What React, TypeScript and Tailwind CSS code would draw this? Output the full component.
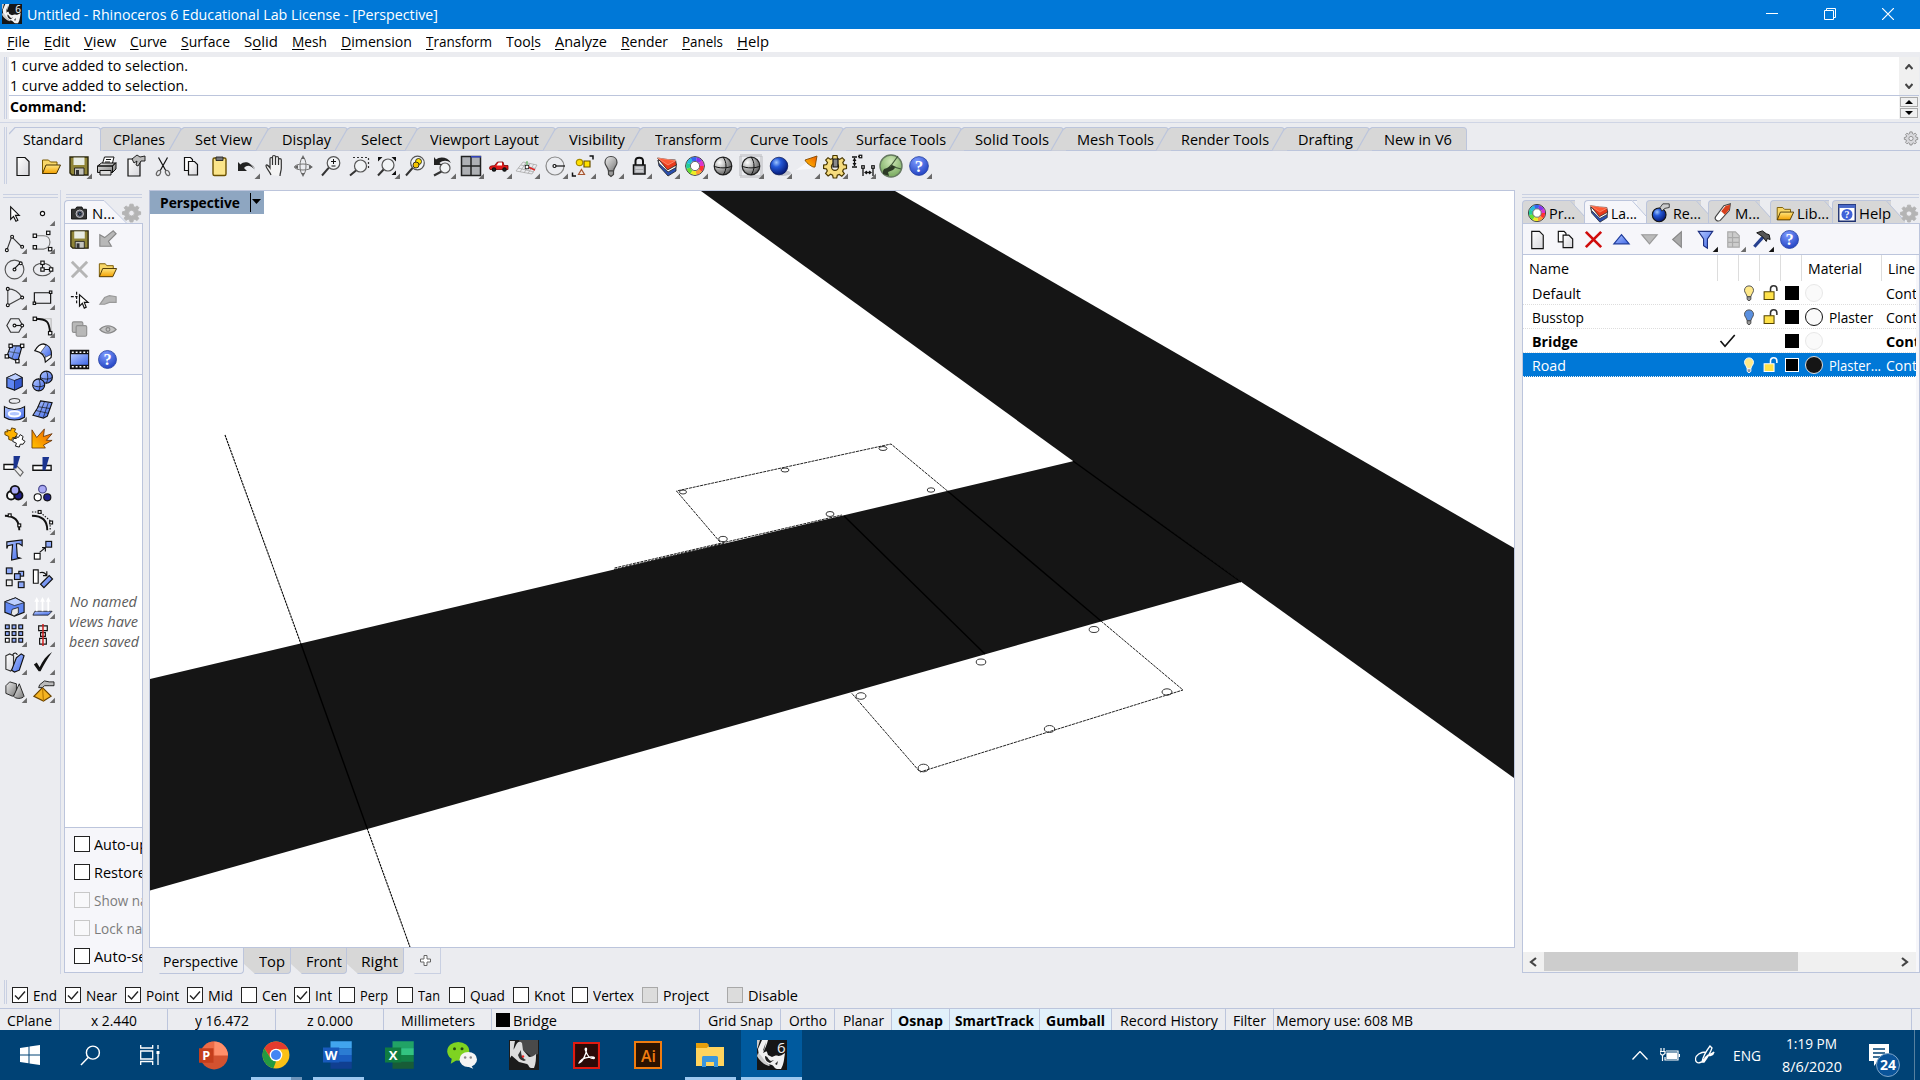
import { useLayoutEffect, useRef, type ReactNode } from 'react';

/* Text squeezed or stretched to the width of its box. */
function T({ children, className = '' }: { children: ReactNode; className?: string }) {
  const outer = useRef<HTMLSpanElement>(null);
  const inner = useRef<HTMLSpanElement>(null);
  useLayoutEffect(() => {
    const o = outer.current;
    const i = inner.current;
    if (!o || !i) return;
    i.style.transform = 'none';
    i.style.transform = `scaleX(${o.clientWidth / i.getBoundingClientRect().width})`;
  });
  return (
    <span ref={outer} className={`block shrink-0 whitespace-nowrap ${className}`}>
      <span ref={inner} className="inline-block origin-left">{children}</span>
    </span>
  );
}

function Svg({ children, fly, dark, className = 'size-6' }: { children?: ReactNode; fly?: boolean; dark?: boolean; className?: string }) {
  return (
    <svg viewBox="0 0 24 24" className={`shrink-0 overflow-visible ${className}`} fill="none" stroke="#111" strokeWidth="1.2">
      {children}
      {fly && <path d="M25 19.500v5.500h-5.500z" fill={dark ? '#111' : '#6a6a6a'} stroke="none" />}
    </svg>
  );
}

const Defs = () => (
  <svg className="absolute size-0">
    <defs>
      <linearGradient id="blue" x1="0" y1="0" x2="1" y2="1"><stop offset="0" stopColor="#b4c8ff" /><stop offset="1" stopColor="#3f68e8" /></linearGradient>
      <linearGradient id="gold" x1="0" y1="0" x2="0" y2="1"><stop offset="0" stopColor="#ffe680" /><stop offset="1" stopColor="#f2a000" /></linearGradient>
      <linearGradient id="page" x1="0" y1="0" x2="1" y2="1"><stop offset="0" stopColor="#fff" /><stop offset="1" stopColor="#d5d5da" /></linearGradient>
      <linearGradient id="gray" x1="0" y1="0" x2="1" y2="1"><stop offset="0" stopColor="#eee" /><stop offset="1" stopColor="#777" /></linearGradient>
      <linearGradient id="fire" x1="0" y1="1" x2="1" y2="0"><stop offset="0" stopColor="#ffc400" /><stop offset="1" stopColor="#ee5a00" /></linearGradient>
      <radialGradient id="help" cx=".4" cy=".25" r=".8"><stop offset="0" stopColor="#7d9bff" /><stop offset="1" stopColor="#1f3fbf" /></radialGradient>
      <radialGradient id="ball" cx=".35" cy=".3" r=".75"><stop offset="0" stopColor="#9cc4ff" /><stop offset=".35" stopColor="#2458d8" /><stop offset="1" stopColor="#02146e" /></radialGradient>
      <radialGradient id="silver" cx=".3" cy=".3" r=".8"><stop offset="0" stopColor="#fff" /><stop offset="1" stopColor="#555" /></radialGradient>
      <radialGradient id="grass" cx=".5" cy=".3" r=".8"><stop offset="0" stopColor="#cfe8b8" /><stop offset="1" stopColor="#6aa050" /></radialGradient>
    </defs>
  </svg>
);

/* ---------- shared glyphs ---------- */
const newPage = <path d="M6 3.500h8l4 4v14H6z" fill="url(#page)" />;
const folder = (
  <g strokeWidth="1">
    <path d="M3.500 19.500V6h6l2 2h6.500v4" fill="#f8d768" stroke="#7a5a00" />
    <path d="M3.500 19.500 7 11H21.500l-4 8.500z" fill="url(#gold)" stroke="#4a3400" />
  </g>
);
const disk = (
  <g>
    <path d="M3 3h18v18H5l-2-2z" fill="#8f8437" stroke="#2a260c" strokeWidth="1.400" />
    <path d="M6.500 3.500h11v7.500h-11z" fill="#e8ece4" stroke="none" />
    <path d="M7.500 14h9.500v7H7.500z" fill="#c4c4bc" strokeWidth=".8" />
    <path d="M9 16h3v5H9z" fill="#333" stroke="none" />
  </g>
);
const cut = (
  <g>
    <path d="M7.500 3.500 15 17M16.500 3.500 9 17" strokeWidth="1.200" />
    <ellipse cx="7.500" cy="19" rx="1.800" ry="2.800" stroke="#666" transform="rotate(30 7.500 19)" />
    <ellipse cx="16.500" cy="19" rx="1.800" ry="2.800" stroke="#666" transform="rotate(-30 16.500 19)" />
  </g>
);
const helpGlyph = (
  <g>
    <circle cx="12" cy="12" r="9.400" fill="url(#help)" stroke="#2440a0" strokeWidth=".8" />
    <text x="12" y="17.800" textAnchor="middle" fill="#fff" stroke="none" fontSize="17" fontWeight="bold" fontFamily="Liberation Serif, serif">?</text>
  </g>
);
const wheel = (
  <g strokeWidth="4">
    <circle cx="12" cy="12" r="9.300" stroke="#222" strokeWidth="1" />
    {['#f33', '#f93', '#ee2', '#6d3', '#2c9', '#2bd', '#36e', '#83e', '#d3c'].map((c, i) => (
      <circle key={c} cx="12" cy="12" r="6.900" stroke={c} strokeDasharray="4.900 38.500" strokeDashoffset={-i * 4.82} />
    ))}
    <circle cx="12" cy="12" r="4.600" strokeWidth=".8" fill="#fff" stroke="#444" />
  </g>
);
const layers = (
  <g strokeWidth=".8" stroke="#222">
    <path d="m3 6 1 6 9 10 8-5v-6z" fill="#2a4fb0" />
    <path d="m3 6 1 3.500 9 8.500 8-4.500v-3z" fill="#fff" />
    <path d="m2.500 4 10 1.500L20.500 6l1 5-9 5z" fill="#e83a1c" />
    <path d="m2.500 4 10.500 7 8-4.500z" fill="#ff5a34" stroke="#ffb09a" strokeWidth=".6" />
  </g>
);
const mag = (x: number, y: number, r: number) => (
  <g>
    <path d={`M${x - r * 0.7} ${y + r * 0.7} 3 21.500`} strokeWidth="2" stroke="#333" />
    <circle cx={x} cy={y} r={r} fill="#f2f4f6" stroke="#555" strokeWidth="1.200" />
  </g>
);
const bulb = (fill: string, stroke: string) => (
  <g>
    <path d="M12 2.500c-4 0-6 3-6 6s3 5 3.500 8.500h5C15 13.500 18 11.500 18 8.500s-2-6-6-6z" fill={fill} stroke={stroke} />
    <path d="M9.500 17h5v3.500L12 22.500 9.500 20.500z" fill="#999" stroke={stroke} />
  </g>
);
const sphereGrid = (
  <g>
    <circle cx="12" cy="12" r="8.800" fill="url(#silver)" stroke="#222" />
    <path d="M3 12c4 2.500 14 2.500 18 0M12 3c4 5 4 13 0 18" strokeWidth="1" />
  </g>
);
const gear = (fill: string, stroke: string, hole = '#ececf0') => (
  <g fill={fill} stroke={stroke}>
    <path d="M10 1.500h4l.6 3 2 .9L19.200 3.700 21.500 6l-1.700 2.600.8 2 2.900.5v3.500l-3 .6-.9 2 1.700 2.500-2.500 2.500-2.500-1.700-2 .8-.6 2.700h-3.500l-.6-2.800-2-.9-2.500 1.700-2.500-2.500 1.700-2.500-.8-2-2.900-.6v-3.300l3-.6.9-2L2.700 6 5 3.700l2.500 1.700 2-.9z" />
    <circle cx="12" cy="12.800" r="3.600" fill={hole} />
  </g>
);
const sq = (x: number, y: number, f = '#fff', s = 3.5) => <rect x={x - s / 2} y={y - s / 2} width={s} height={s} fill={f} />;
const dot = (x: number, y: number, f = '#fff') => <circle cx={x} cy={y} r="1.500" fill={f} />;
/* rhino head, 30 x 30 */
const rhinoHead = (
  <g stroke="none">
    <path d="M0 0h30v30H0z" fill="#161616" />
    <path d="M5 0h6c-1 4-3 9-5 13 2-1 4-2 4-1l1 3 4 2c2-1 5-2 6-1 3 0 4-1 7-3-1 6-1 11-4 16h-4c-2 0-3-3-5-4l-4-1c-3-2-7-4-9-8L1 9z" fill="#f2f2f2" />
    <path d="M0 0h3L1 7 0 9zM1 13c5 3 6 9 12 12l-1 1C6 24 2 20 0 16z" fill="#ccc" />
    <path d="M8 16c3 0 3 4 6 5l3-1-4 3c-3-1-5-3-5-7zM18 24l3-3-1 4z" fill="#222" />
    <path d="M9 2 6 10l1 1z" fill="#444" />
  </g>
);

/* ---------- main toolbar ---------- */
const toolbar: [ReactNode, boolean][] = [
  [newPage, false],
  [folder, false],
  [disk, true],
  [<g strokeWidth="1"><path d="m7 11 2.500-8H19l-2 8z" fill="#fff" /><path d="m2.500 12 4-3h14l-3 3zM2.500 12h15v6.500h-15zM17.500 12l3.500-3.500V15l-3.500 3.500z" fill="url(#gray)" /><path d="M5 16.500h11V21H5z" fill="#ddd" /><path d="M11 5.500h5M10 8h5" /></g>, false],
  [<g><path d="M5 5h12v17H5z" fill="url(#page)" /><path d="m9 5 5-4 3 2 5-1v5h-4l-3 5-2-1 1-4-3 2z" fill="#bbb" strokeWidth=".9" /></g>, false],
  [cut, false],
  [<g><path d="M5.500 3.500h6l2 2v11h-8z" fill="#fff" /><path d="M9.500 7.500h6l3 3v10.500h-9z" fill="url(#page)" /></g>, false],
  [<g><rect x="6" y="4" width="13" height="17.500" rx="1.500" fill="#fbe58a" stroke="#6b5200" strokeWidth="1.400" /><path d="M9 3h7v3.500H9z" fill="#777" stroke="#222" strokeWidth=".9" /></g>, false],
  [<g stroke="none"><path d="M3 8v9h9l-3-3c3-3 6-3 10 1C15 7 9 7 5.500 10.500z" fill="#222" /><path d="M16 11c3 1 4 4 4 7 0-5-1-7-6-8z" fill="#777" /></g>, true],
  [<path d="M8 21c-1-3-5-7-5-9s2-1 4 2V5c0-2 2.500-2 2.500 0V3c0-2 3-2 3 0v1c0-2 3-2 3 0v2c0-1.800 2.800-1.800 2.800 0v8c0 3-1.300 5-1.300 8M9.500 5v6M12.500 4v7M15.500 5v6" fill="#f4f4f4" stroke="#333" />, false],
  [<g stroke="#777" strokeWidth="1"><ellipse cx="12" cy="13" rx="8.500" ry="3" /><ellipse cx="12" cy="12" rx="3" ry="8.500" /><path d="m12 1 2 4h-4zM3 13l4-2v4zM22 13l-4-2v4zM12 23l2-4h-4z" fill="#666" stroke="none" /></g>, false],
  [<g>{mag(14.5, 9, 6.3)}<path d="M12 7.500h5M14.500 5v5M12.500 12h4" strokeWidth="1" /></g>, false],
  [<g><path d="M6 3.500h15.500v12" strokeDasharray="2 2" stroke="#333" />{mag(13.5, 12, 6)}</g>, false],
  [<g>{mag(13, 11, 6)}<path d="M3 7.500V3h4.500zM16.500 3H21v4.500zM21 16.500V21h-4.500z" fill="#111" stroke="none" /></g>, true],
  [<g>{mag(14.5, 9, 6.8)}<circle cx="15.500" cy="7.500" r="3" fill="#ffe200" strokeWidth=".8" /><circle cx="13" cy="11" r="3" fill="#f5c400" strokeWidth=".8" /></g>, false],
  [<g>{mag(14, 14, 5)}<path d="M3 3v8h8L8.500 9C12 6 16 6 20 9 17 3 9 2 5 5.500z" fill="#222" stroke="none" /></g>, true],
  [<g><path d="M2.500 2.500h19v19h-19z" fill="#aeb0b4" stroke="#222" strokeWidth="1.500" /><path d="M12 2.500v19M2.500 12h19" stroke="#222" strokeWidth="1.500" /><path d="M12 2h10v1.500H12z" fill="#34b" stroke="none" /></g>, true],
  [<g><path d="M2.500 14.500c0-3 2-2.500 5-3l3-3.500h5.500l1 3.500h4v4H3z" fill="#e01818" stroke="#700" strokeWidth=".8" /><path d="m11.500 8.500-2 3h5.500v-3z" fill="#fff" stroke="none" /><circle cx="7" cy="15.500" r="1.700" fill="#222" /><circle cx="17.500" cy="15.500" r="1.700" fill="#222" /></g>, true],
  [<g stroke="#aaa" strokeWidth=".8"><path d="m8 8 14 3-5 9L1 17zM11 8.500 5 18M15 9.500l-6 9.500M19 10l-6 9.500M6 11l14.500 3.500M3 14l16 4" /><path d="M12 13V7" stroke="#2a2" /><path d="m13 13 7 3" stroke="#d22" strokeWidth="1.500" /><g stroke="#111">{sq(12, 13)}</g></g>, true],
  [<g><circle cx="12" cy="12" r="9" stroke="#888" /><path d="M12 12h10" />{dot(11.5, 12)}</g>, true],
  [<g><circle cx="8.500" cy="8.500" r="3.200" fill="#ffe000" stroke="#a68a00" /><path d="M13 7h6v6h-6z" fill="#ffe000" stroke="#6b5200" /><path d="m10.500 15.500 3 5h-6z" fill="#f4e8e0" stroke="#a65430" /><path d="M18.500 2H22v3.500M1.500 18.500V22H5" strokeWidth="1.500" /></g>, true],
  [bulb('url(#gray)', '#444'), true],
  [<g><path d="M8.500 11V7c0-4.500 7.500-4.500 7.500 0v4" strokeWidth="2" /><path d="M6.500 11h11.500v9H6.500z" fill="#a9abb0" stroke="#111" strokeWidth="1.500" /><path d="M8.500 14h7.500M8.500 17h7.500" stroke="#eee" /></g>, true],
  [layers, true],
  [wheel, true],
  [sphereGrid, false],
  [<g><path d="M1.500 1.500h21v21h-21z" fill="none" stroke="#b8b8bc" strokeWidth="3" strokeDasharray="1 1" />{sphereGrid}</g>, true],
  [<g><ellipse cx="15" cy="19" rx="9" ry="3" fill="#c2c4cc" stroke="none" /><circle cx="12" cy="12" r="8.800" fill="url(#ball)" stroke="#021050" strokeWidth=".7" /></g>, true],
  [<g><path d="m1 16 13-9 3 8z" fill="#fafafd" stroke="none" opacity=".8" /><path d="M10 6 22 2l-2 11c-2 1-9-4-10-7z" fill="url(#fire)" stroke="#844a00" strokeWidth=".9" /></g>, true],
  [<g>{gear('#f6dc7e', '#4a3800')}<path d="M10 5h5v8h-5z" fill="#888" /></g>, true],
  [<g><path d="M1 3h5M1 13h5M3.500 4v8M7 2.500h3M12 13v9M22 13v9M14 18.500h6M12 3v0" strokeWidth="1.300" /><path d="m3.500 4 2 3h-4zM3.500 12l2-3h-4zM13 18.500l3-2v4zM21 18.500l-3-2v4z" fill="#111" stroke="none" />{sq(9.5, 2.5, '#fff', 2.5)}{sq(12, 13, '#fff', 2.5)}{sq(22, 13, '#fff', 2.5)}</g>, true],
  [<g><circle cx="12" cy="12" r="11" fill="url(#grass)" stroke="#667a60" strokeWidth="1.400" /><path d="M4 20c0-4 0-5 4-6 3-1 3-4 5-3l4 2-3 3-5 2 1 4z" fill="#2c3a26" stroke="none" /><path d="M11 13 19 2M15 13l7 2" stroke="#40583a" /></g>, false],
  [helpGlyph, true],
];

/* ---------- side tools, two per row ---------- */
const tools: [ReactNode, boolean][] = [
  [<path d="M8 5v13l3-3 2.500 5 2-1-2.500-5h4z" fill="#fff" />, false],
  [<circle cx="12" cy="12" r="2.200" fill="#fff" />, true],
  [<g><path d="M4 21 9 7l11 11" stroke="#333" />{dot(4, 21)}{dot(9.5, 7)}{dot(20, 17.5)}</g>, true],
  [<g><path d="M4 6h9c9 0 9 13 0 14H4" stroke="#777" />{sq(4, 6)}{sq(18, 3)}{sq(4, 18)}{sq(20, 20)}</g>, true],
  [<g><circle cx="12" cy="12" r="9.800" stroke="#555" /><path d="m12 11 6-6" />{dot(12, 12)}{dot(18.5, 5.5)}</g>, true],
  [<g><ellipse cx="12" cy="12" rx="9.500" ry="6.500" stroke="#555" /><path d="M12 5v7h10" />{sq(12, 5)}{sq(12, 12)}{sq(21, 12)}</g>, true],
  [<g><path d="M5 3c8 0 12 4 15 9M5 3v17l15-8" stroke="#444" />{dot(5, 3)}{dot(5, 20)}{dot(20, 12)}</g>, true],
  [<g><path d="M3.500 7h17v11h-17z" />{sq(20.5, 6.5, '#fff', 2.5)}{sq(3.5, 18, '#fff', 2.5)}</g>, true],
  [<g><path d="m8 5 8.500 0 4 7-4 7H8l-4-7z" stroke="#333" /><path d="M12 12h8" />{dot(12, 12)}{dot(20, 12)}</g>, true],
  [<g><path d="M3 5h18v15" stroke="#bbb" /><path d="M4 5c13 0 15 3 16 15" strokeWidth="2" />{sq(4, 5)}{sq(20, 20)}</g>, true],
  [<g><path d="m8 4 12 0-4.500 16L4 15z" fill="url(#blue)" /><path d="m6 10 12 2M14 4l-5 14" stroke="#345" strokeWidth=".8" />{sq(8, 4)}{sq(20, 4)}{sq(4, 15)}{sq(15, 20)}</g>, true],
  [<g><path d="M4 9c3-5 6-7 9-7 7 2 9 8 8 14l-6 5c0-5-2-10-11-12z" fill="#fff" /><path d="m10 11 6-8c4 2 5 6 5 10l-6 3c0-3-3-4-5-5z" fill="url(#blue)" strokeWidth=".6" /></g>, true],
  [<g><path d="m4 8 9-4 7 4v9l-8 4-8-3z" fill="#5f86f2" /><path d="m4 8 8 3 8-3-7-4z" fill="#bccfff" strokeWidth=".7" /><path d="m12 11 8-3v9l-8 4z" fill="#3459d0" strokeWidth=".7" /></g>, true],
  [<g><circle cx="16" cy="7.500" r="6.300" fill="url(#blue)" /><circle cx="8" cy="15.500" r="6.300" fill="url(#blue)" /><path d="M10 8c3 2 9 2 12 0M16 1c2 4 2 9 0 13M2 16c3 2 9 2 12 0M8 9c2 4 2 9 0 13" strokeWidth=".8" /></g>, true],
  [<g><ellipse cx="12" cy="3" rx="5.500" ry="2.500" stroke="#444" /><path d="M1.500 9c6 4 15 4 21 0v11c-6 4-15 4-21 0z" fill="url(#blue)" /><ellipse cx="12" cy="16.500" rx="6" ry="2.800" stroke="#fff" strokeWidth="2" fill="#b4c8ff" /></g>, true],
  [<g><path d="m10 3 12 2-5 14-4 2-11-3c3-4 6-9 8-15z" fill="url(#blue)" /><path d="m7 9 13 2M5 13l13 3M14 4 8 19M18 5l-5 15" strokeWidth=".7" /></g>, true],
  [<g strokeWidth="1"><path d="m4 4 4 1 1-3 4 1-1 3 3 2-2 4-3 0-1 3-3-1 0-3-4-2 0-3 3 0z" fill="#ffb200" stroke="#5c3c00" /><path d="m13 11 3 1 2-3 3 2-1 3 3 2-2 3-3 0-1 3-4-1 1-3-4-2 1-3 3 0z" fill="#fff" /></g>, false],
  [<path d="M1 23V4l5 8 8-9-1 8 9-3-6 7 6 0-9 5 2 3z" fill="url(#fire)" stroke="#5a2a00" strokeWidth=".8" />, false],
  [<g><path d="M1 11h11v5H1z" fill="#fff" strokeWidth="1.400" /><path d="m14 12 7 7-3 4-7-8z" fill="#eee" stroke="#666" /><path d="M11 2h7l-4 13h-3z" fill="#1b3590" stroke="none" /></g>, false],
  [<g><path d="M2 12h19v5H2z" fill="#fff" strokeWidth="1.400" /><path d="M12 3h7l-4 14h-3z" fill="#1b3590" stroke="none" /></g>, false],
  [<g strokeWidth="2"><circle cx="8.500" cy="14" r="4.300" fill="#fff" /><circle cx="16" cy="14" r="4.300" fill="#20208a" /><circle cx="12.500" cy="8.500" r="4.500" fill="#a9a9f5" /></g>, true],
  [<g><circle cx="12" cy="7.500" r="4" fill="#a9a9f5" stroke="#448" /><circle cx="7" cy="16" r="3.700" fill="#fff" /><circle cx="17" cy="16" r="3.700" fill="#20208a" /></g>, false],
  [<g><path d="M2 5c10 0 15 5 15 15" strokeWidth="2" />{sq(7, 4.5, '#fff', 3)}{sq(17, 15, '#fff', 3)}</g>, false],
  [<g><path d="M1 5c12 0 16 6 16 15" strokeWidth="2" /><path d="M1 1h8l11 9v11" strokeDasharray="1.500 1.500" />{sq(9, 1, '#fff', 3)}{sq(21, 12, '#fff', 3)}</g>, true],
  [<path d="M4 3 20 1l0 6-3-2-3 0 1 14 3 1-9 2 0-3 1-13-5 1-1 3z" fill="url(#blue)" />, false],
  [<g>{sq(6.5, 18, '#fff', 6)}{sq(18.500, 5.500, '#8da8f8', 6)}<path d="m9 14 6-5M11.500 9H15v4" /></g>, true],
  [<g>{sq(6.500, 4, '#8da8f8', 6)}{sq(19, 7, '#8da8f8', 5)}{sq(15, 10, '#8da8f8', 6)}{sq(6.500, 16.500, '#eee', 6)}{sq(19, 18.500, '#8da8f8', 6)}</g>, false],
  [<g><path d="M2.500 3h5v14h-5z" fill="#fff" /><path d="m10 18 9-9 3.500 3.500-9 9z" fill="url(#blue)" /><path d="M9 6c4-1 6 0 7 3M12.500 9h4V4.500" /></g>, false],
  [<g><path d="m2 7 11-4 9 5v10l-10 4-10-4z" fill="#5f86f2" /><path d="m2 7 10 4 10-3-9-5z" fill="#bccfff" strokeWidth=".7" /><path d="M9.500 15 16 13v6l-4.500 3-3-2z" fill="#e8e8e8" strokeWidth=".8" /></g>, true],
  [<g><path d="m4 17 18-0-4 4H2z" fill="url(#blue)" strokeWidth=".8" /><path d="M6 17V6M12 17V6M18 17V6" stroke="#fff" strokeWidth="1.800" /><path d="m6 2 2.500 5h-5zM12 2l2.500 5h-5zM18 2l2.500 5h-5z" fill="#fff" stroke="none" /></g>, true],
  [<g>{[4, 11, 18].map((y) => [4.5, 11.5, 18.5].map((x) => <g key={x + y * 30}>{sq(x, y, y === 18 && x === 4.5 ? '#fff' : '#8da8f8', 4)}</g>))}</g>, true],
  [<g><path d="M8 3h9v5H8zM10 10h5v4h-5zM9 16h7v6H9z" fill="#eee" /><path d="M12.500 1v23" stroke="#d02020" strokeWidth="2" opacity=".8" /></g>, true],
  [<g><path d="M3 5 7 3l4 2v12l-3 4-5-2z" fill="url(#page)" stroke="#333" /><path d="m14 7 5-4 3 2-5 15-5 2-3-2z" fill="url(#blue)" /><path d="M10 4c2-3 4-2 5 0" /></g>, true],
  [<path d="m3 14 3-2 3 5C12 10 16 5 22 1 17 8 13 15 10 21H8z" fill="#111" stroke="none" />, true],
  [<g strokeWidth=".9"><path d="m3 7 4-4 7 2v9l-4 4-7-3z" fill="url(#gray)" /><path d="M17 5 11 18c2 3 9 3 11 0z" fill="url(#gray)" /></g>, true],
  [<g><path d="m12 9 9 9-8 5-10-5z" fill="#f5b422" stroke="#6b4400" /><path d="m12 9 1 14" stroke="#b97900" /><path d="m9 6 5-4 5 1h5v4h-5l-5 0-2 2-4 0z" fill="#bbb" strokeWidth=".9" /></g>, true],
];

const panelTools: ReactNode[] = [
  disk,
  <path d="m18 3 3 3-8 8 3 5H4V7l5 3z" fill="#b8b8b8" stroke="#888" />,
  <path d="m4 4 16 16M20 4 4 20" stroke="#b5b5b5" strokeWidth="3" />,
  folder,
  <g><path d="M3 9h7M9 4v12" strokeDasharray="3 1.500" /><path d="M12 7v12l3-3 2 5 2-1-2-5h4z" fill="#fff" /></g>,
  <path d="m4 17 5-7 5-2 7 1v6h-7l-5 2z" fill="#b8b8b8" stroke="#999" />,
  <g fill="#b8b8b8" stroke="#909090"><rect x="4.500" y="4" width="11" height="11" rx="1.500" /><rect x="8.500" y="8" width="11" height="11" rx="1.500" /></g>,
  <g stroke="#888"><path d="M4 12c5-5 12-5 17 0-5 5-12 5-17 0z" fill="#c4c4c4" /><circle cx="12.500" cy="12" r="2" /></g>,
  <g><path d="M2.500 2.500h19v19h-19z" fill="#111" /><rect x="3" y="6.500" width="18" height="11" fill="url(#blue)" stroke="none" /><path d="M4 4.500h17M4 19.500h17" stroke="#fff" strokeWidth="1.500" strokeDasharray="2 2" /></g>,
  helpGlyph,
];

const layerTools: [ReactNode, boolean][] = [
  [newPage, false],
  [<g><path d="M4.500 3.500h6l2 2v9h-8z" fill="#fff" /><path d="M9.500 7.500h6l4 4v9h-10z" fill="url(#page)" /></g>, false],
  [<path d="m4 4 16 16M20 4 4 20" stroke="#d00c0c" strokeWidth="2.800" />, false],
  [<path d="m12 7 8 9.500H4z" fill="url(#blue)" stroke="#1c3a9a" />, false],
  [<path d="m12 16.500-8-9.500h16z" fill="#bbb" stroke="#999" />, false],
  [<path d="m7 12 9-8v16z" fill="#aaa" stroke="#888" />, false],
  [<path d="M4.500 3.500h15l-5.500 8v9.500l-4-2.500v-7z" fill="url(#blue)" stroke="#1c2f80" />, true],
  [<path d="M6 4h8l4 4v12H6zM6 10h12M6 15h12M11 4v16" fill="#ccc" stroke="#aaa" />, true],
  [<g><path d="M14 9 4.500 19.500" stroke="#26408f" strokeWidth="3.300" /><path d="m7 5 6-2 4 3 3 1 1 5-3-1-1 3-4-5z" fill="#555" strokeWidth="1" /></g>, true],
  [helpGlyph, false],
];

/* ---------- tabs ---------- */
function Tab({ label, text, body, active, first }: { label: string; text: string; body: string; active?: boolean; first?: boolean }) {
  return (
    <div className={`flex h-6 shrink-0 ${first ? '' : '-ml-[13px]'} ${active ? 'relative z-10' : ''}`}>
      <svg className="h-6 w-[15px] shrink-0" viewBox="0 0 15 24">
        <path d={first ? 'M0 24V7L7 .5h8V24z' : 'M0 23.500 13 2 15 .5V23.500z'} fill={active ? '#ebecf0' : '#d7d7d7'} />
        <path d={first ? 'M0 7 6 .5h9' : 'M0 23.500 12 2.500 15 .5'} fill="none" stroke="#bcc5dc" strokeWidth="1.200" />
      </svg>
      <div className={`flex items-center rounded-tr border-t border-r border-[#bcc5dc] pb-px ${active ? 'bg-[#ebecf0]' : 'border-b bg-[#d7d7d7]'} ${body}`}>
        <T className={text}>{label}</T>
      </div>
    </div>
  );
}

const tabs: [string, string, string][] = [
  ['Standard', 'w-[60px] -ml-px', 'w-[77px]'],
  ['CPlanes', 'w-[52px] ml-[10px]', 'w-[79px]'],
  ['Set View', 'w-[57px] ml-[11px]', 'w-[85px]'],
  ['Display', 'w-[49px] ml-[11px]', 'w-[77px]'],
  ['Select', 'w-[41px] ml-[11px]', 'w-[68px]'],
  ['Viewport Layout', 'w-[109px] ml-[10px]', 'w-[136px]'],
  ['Visibility', 'w-[56px] ml-[11px]', 'w-[83px]'],
  ['Transform', 'w-[67px] ml-[12px]', 'w-[95px]'],
  ['Curve Tools', 'w-[78px] ml-[10px]', 'w-[104px]'],
  ['Surface Tools', 'w-[90px] ml-[10px]', 'w-[116px]'],
  ['Solid Tools', 'w-[74px] ml-[11px]', 'w-[100px]'],
  ['Mesh Tools', 'w-[77px] ml-[11px]', 'w-[103px]'],
  ['Render Tools', 'w-[88px] ml-[10px]', 'w-[114px]'],
  ['Drafting', 'w-[55px] ml-[11px]', 'w-[83px]'],
  ['New in V6', 'w-[68px] ml-[12px]', 'w-[95px]'],
];

const menus: [string, string, string, string][] = [
  ['', 'F', 'ile', 'w-[23px]'], ['', 'E', 'dit', 'w-[26px]'], ['', 'V', 'iew', 'w-[32px]'], ['', 'C', 'urve', 'w-[37px]'],
  ['', 'S', 'urface', 'w-[49px]'], ['S', 'o', 'lid', 'w-[34px]'], ['', 'M', 'esh', 'w-[35px]'], ['', 'D', 'imension', 'w-[71px]'],
  ['', 'T', 'ransform', 'w-[66px]'], ['Too', 'l', 's', 'w-[35px]'], ['', 'A', 'nalyze', 'w-[52px]'], ['', 'R', 'ender', 'w-[47px]'],
  ['', 'P', 'anels', 'w-[41px]'], ['', 'H', 'elp', 'w-[32px]'],
];

const osnaps: [string, string, string, number][] = [
  ['End', 'w-[24px]', 'w-[53px]', 1], ['Near', 'w-[31px]', 'w-[60px]', 1], ['Point', 'w-[33px]', 'w-[62px]', 1], ['Mid', 'w-[25px]', 'w-[54px]', 1],
  ['Cen', 'w-[25px]', 'w-[53px]', 0], ['Int', 'w-[17px]', 'w-[45px]', 1], ['Perp', 'w-[28px]', 'w-[58px]', 0], ['Tan', 'w-[22px]', 'w-[52px]', 0],
  ['Quad', 'w-[35px]', 'w-[64px]', 0], ['Knot', 'w-[31px]', 'w-[59px]', 0], ['Vertex', 'w-[41px]', 'w-[70px]', 0],
  ['Project', 'w-[46px]', 'w-[85px]', 2], ['Disable', 'w-[50px]', 'w-[80px]', 2],
];

const status: [string, string, string][] = [
  ['CPlane', 'w-[60px]', 'w-[45px]'], ['x 2.440', 'w-[108px]', 'w-[46px]'], ['y 16.472', 'w-[108px]', 'w-[54px]'],
  ['z 0.000', 'w-[108px]', 'w-[46px]'], ['Millimeters', 'w-[108px]', 'w-[74px]'],
];
const status2: [string, string, string][] = [
  ['Grid Snap', 'w-[81px]', 'w-[65px]'], ['Ortho', 'w-[54px]', 'w-[38px]'], ['Planar', 'w-[57px]', 'w-[41px]'],
  ['Osnap', 'w-[58px] bg-[#e1f1fb] font-bold', 'w-[45px]'], ['SmartTrack', 'w-[90px] bg-[#e1f1fb] font-bold', 'w-[79px]'],
  ['Gumball', 'w-[72px] bg-[#e1f1fb] font-bold', 'w-[59px]'], ['Record History', 'w-[114px]', 'w-[98px]'], ['Filter', 'w-[48px]', 'w-[33px]'],
];

function Box({ state }: { state: number }) {
  return (
    <span className={`flex size-4 shrink-0 items-center justify-center border ${state === 2 ? 'border-[#a8a8a8] bg-[#dcdcdc]' : state === 3 ? 'border-[#c8c8c8] bg-[#f8f8fa]' : 'border-[#222] bg-white'}`}>
      {state === 1 && <svg viewBox="0 0 14 14" className="size-3.5"><path d="M2 7.500 5.500 11 12 3.500" fill="none" stroke="#222" strokeWidth="1.400" /></svg>}
    </span>
  );
}

const Grip = ({ className = '' }: { className?: string }) => <div className={`h-[4px] shrink-0 border-y border-[#c9d0e2] ${className}`} />;

function Viewport() {
  const circles = [[683, 492, 3.5, 2], [785, 470, 4, 2], [883, 448.5, 4, 2], [931, 490, 3.8, 2.2], [830, 514, 4, 2.5], [723, 539, 4.2, 2.6], [1094, 629.5, 4.8, 3], [981, 662, 4.8, 3], [861, 696, 5, 3.3], [1167, 692, 5, 3.2], [1049.5, 729, 5.2, 3.5], [923.5, 768, 5.4, 3.8]];
  return (
    <svg viewBox="150 191 1364 756" className="block h-[756px] w-[1364px]" fill="none">
      <path d="M701 191H895L1514 548V778L1073 461z" fill="#151515" />
      <path d="M150 679 1074 461 1241 582 150 890.500z" fill="#151515" />
      <path d="m1073 461 168 121M844 516l141 138M947.500 491 1101 621M301 644l66 184" stroke="#000" strokeWidth="1.400" />
      <path d="m225 435 76 209M367 828l43 119" stroke="#000" strokeWidth="1.100" strokeDasharray="2.500 .7" />
      <path d="m720 542-43.500-51L891 444l56.500 47M1101 621l82 69-263 82-68.500-79M614.500 568 842 515M614 569.500l110-26" stroke="#222" strokeWidth="1" strokeDasharray="3 .8" />
      {circles.map(([x, y, rx, ry]) => <ellipse key={x} cx={x} cy={y} rx={rx} ry={ry} stroke="#222" strokeWidth=".9" />)}
    </svg>
  );
}

const viewTabs: [string, string, string][] = [
  ['Perspective', 'w-[95px] bg-[#ebecf0] pl-[14px]', 'w-[75px]'], ['Top', 'w-[47px] bg-[#d7d7d7] pl-[15px]', 'w-[26px]'],
  ['Front', 'w-[56px] bg-[#d7d7d7] pl-[15px]', 'w-[36px]'], ['Right', 'w-[57px] bg-[#d7d7d7] pl-[14px]', 'w-[37px]'],
];

const rightTabs: [string, string, string, ReactNode][] = [
  ['Pr...', 'w-[62px]', 'w-[26px]', wheel],
  ['La...', 'w-[62px]', 'w-[26px]', layers],
  ['Re...', 'w-[62px]', 'w-[28px]', <g><circle cx="10" cy="14" r="7.500" fill="url(#ball)" /><path d="m11 6 3-4h7v4l-5 1-3 3z" fill="#ccc" strokeWidth=".8" /></g>],
  ['M...', 'w-[62px]', 'w-[25px]', <g><path d="m4 16 9-12 7-2-1 7L9 20c-3 2-7-1-5-4z" fill="#fff" stroke="#444" /><path d="m10 10 5-6 5-1-1 5-5 6z" fill="#d8401c" stroke="none" /></g>],
  ['Lib...', 'w-[62px]', 'w-[32px]', folder],
  ['Help', 'w-[70px]', 'w-[32px]', <g><path d="M3 3h18v18H3z" fill="#fff" stroke="#1c2f70" strokeWidth="1.500" /><path d="M3 3h18v3.500H3z" fill="#4868c8" stroke="none" /><circle cx="12" cy="13.500" r="6" fill="#3f62d8" stroke="none" /><text x="12" y="17.500" textAnchor="middle" fill="#fff" stroke="none" fontSize="11" fontWeight="bold" fontFamily="Liberation Serif, serif">?</text></g>],
];

function LayerRow({ name, w, bulbFill, lock, mat, matText, sel, current }: { name: string; w: string; bulbFill?: string; lock?: boolean; mat: 'none' | 'white' | 'black'; matText?: string; sel?: boolean; current?: boolean }) {
  return (
    <div className={`flex h-6 items-center overflow-hidden border-b border-dotted ${sel ? 'border-[#eee] bg-[#0078d7] text-white' : 'border-[#ddd]'} ${current ? 'font-bold' : ''}`}>
      <div className="w-[196px] shrink-0 pl-[9px]"><T className={w}>{name}</T></div>
      <div className="w-[19px] shrink-0">{current && <Svg className="size-[18px]"><path d="m2 12 6 7L21 4" strokeWidth="2.200" /></Svg>}</div>
      <div className="flex w-[22px] shrink-0 justify-center">{bulbFill && <Svg className="size-[18px]">{bulb(bulbFill, sel ? '#fff' : '#444')}</Svg>}</div>
      <div className="flex w-[21px] shrink-0 justify-center">{lock && <Svg className="size-[17px]"><path d="M12 11V7c0-6 9-6 9 0v3" strokeWidth="2.200" stroke={sel ? '#fff' : '#333'} /><path d="M3 11h14v11H3z" fill="#ffe24a" stroke={sel ? '#fff' : '#554400'} strokeWidth="1.500" /></Svg>}</div>
      <div className="flex w-[21px] shrink-0 justify-center"><span className={`size-3.5 bg-black ${sel ? 'outline outline-1 -outline-offset-1 outline-white' : ''}`} /></div>
      <div className="flex w-[24px] shrink-0 justify-center"><span className={`size-[18px] rounded-full border ${mat === 'none' ? 'border-[#e8e8e8] bg-[#fafafa]' : mat === 'white' ? 'border-[#111] bg-[#fafafa]' : 'border-[#ddd] bg-[#151515]'}`} /></div>
      <div className="w-[60px] shrink-0 pl-[3px]">{matText && <T className={matText.endsWith('.') ? 'w-[52px]' : 'w-[44px]'}>{matText}</T>}</div>
      <T className={current ? 'w-[34px]' : 'w-[31px]'}>Cont</T>
    </div>
  );
}

function TaskCell({ children, className = 'w-[62px]', line }: { children: ReactNode; className?: string; line?: ReactNode }) {
  return (
    <div className={`flex h-[50px] shrink-0 flex-col items-center ${className}`}>
      <div className="flex h-[47px] items-center pt-[3px]">{children}</div>
      {line}
    </div>
  );
}
const line = <div className="h-[3px] w-[51px] bg-[#9cc8f0]" />;

const office = (letter: string, main: string, colors: string[]) => (
  <Svg className="size-[30px]">
    <g stroke="none">
      {colors.map((c, i) => <path key={c} d={`M6 ${1 + i * 5.5}h17v5.500H6z`} fill={c} />)}
      <path d="M0 6h13v12H0z" fill={main} />
      <text x="6.500" y="15.800" textAnchor="middle" fontSize="10.500" fontWeight="bold" fill="#fff" fontFamily="Open Sans, sans-serif">{letter}</text>
    </g>
  </Svg>
);

export default function App() {
  return (
    <div className="flex h-[1080px] w-[1920px] flex-col overflow-hidden bg-[#ebecf0] font-['Open_Sans','Noto_Sans',sans-serif] text-[15px] leading-5 text-black">
      <Defs />
      {/* title bar */}
      <header className="flex h-[29px] shrink-0 items-center bg-[#0078d7] pb-px text-white">
        <svg viewBox="0 0 30 30" className="ml-[2px] h-5 w-5 overflow-visible">{rhinoHead}<text x="20" y="13" fontSize="15" fill="#fff" fontFamily="Open Sans, sans-serif">6</text></svg>
        <T className="ml-[5px] w-[411px]">Untitled - Rhinoceros 6 Educational Lab License - [Perspective]</T>
        <div className="mr-[26px] ml-auto flex gap-[46px]">
          <svg className="size-3" viewBox="0 0 12 12"><path d="M0 5.500h12" stroke="#fff" /></svg>
          <svg className="size-3" viewBox="0 0 12 12"><path d="M.5 2.500h9v9h-9zM2.500 2.500v-2h9v9h-2" fill="none" stroke="#fff" /></svg>
          <svg className="size-3" viewBox="0 0 12 12"><path d="m0 0 12 12M12 0 0 12" stroke="#fff" strokeWidth="1.200" /></svg>
        </div>
      </header>
      {/* menu */}
      <nav className="flex h-[23px] shrink-0 items-center gap-[14px] bg-white pl-[7px]">
        {menus.map(([a, u, b, w]) => (
          <T key={a + u + b} className={w}>{a}<span className="underline underline-offset-2">{u}</span>{b}</T>
        ))}
      </nav>
      {/* command area */}
      <section className="flex h-[71px] shrink-0 border-b border-[#cfd5e5] pt-[5px] pb-[3px]">
        <div className="mr-[2px] ml-[4px] w-[3px] border-x border-[#c9d0e2]" />
        <div className="h-[62px] w-[1890px] bg-white">
          <div className="h-[39px] border-b border-[#bcc5dc] pl-[1px]">
            <T className="h-5 w-[178px] leading-[16px]">1 curve added to selection.</T>
            <T className="h-5 w-[178px] leading-[16px]">1 curve added to selection.</T>
          </div>
          <T className="ml-[1px] w-[76px] leading-[20px] font-bold">Command:</T>
        </div>
        <div className="flex h-[62px] w-5 flex-col bg-[#f0f0f0]">
          <div className="flex h-[39px] flex-col items-center justify-around border-b border-[#bcc5dc] pr-px">
            <svg className="h-[6px] w-2" viewBox="0 0 8 6"><path d="m.5 5 3.500-4 3.500 4" fill="none" stroke="#444" strokeWidth="2" /></svg>
            <svg className="h-[6px] w-2" viewBox="0 0 8 6"><path d="m.5 1 3.500 4 3.500-4" fill="none" stroke="#444" strokeWidth="2" /></svg>
          </div>
          <div className="flex flex-col gap-px px-px pt-px">
            <div className="flex h-[10px] items-center justify-center border border-[#aaa]"><svg className="h-1 w-2" viewBox="0 0 8 4"><path d="M4 0 8 4H0z" /></svg></div>
            <div className="flex h-[10px] items-center justify-center border border-[#aaa]"><svg className="h-1 w-2" viewBox="0 0 8 4"><path d="M4 4 8 0H0z" /></svg></div>
          </div>
        </div>
      </section>
      {/* toolbar tabs */}
      <section className="flex h-[28px] shrink-0 pt-[4px]">
        <div className="mr-[2px] ml-[4px] h-[57px] w-[3px] shrink-0 border-x border-[#c9d0e2]" />
        <div className="flex h-6 grow border-b border-[#bcc5dc]">
          {tabs.map(([l, t, b], i) => <Tab key={l} label={l} text={t} body={b} active={i === 0} first={i === 0} />)}
          <Svg className="mt-[4px] mr-[2px] ml-auto size-[14px]">{gear('#d8d8dc', '#777')}</Svg>
        </div>
      </section>
      <section className="flex h-[39px] shrink-0 items-start pt-[3px] pl-[9px]">
        {toolbar.map(([g, fly], i) => <div key={i} className="flex w-7 shrink-0 justify-center"><Svg fly={fly}>{g}</Svg></div>)}
      </section>
      {/* work area */}
      <main className="flex h-[784px] shrink-0">
        <aside className="flex w-[61px] shrink-0 flex-col border-r border-[#cfd5e5]">
          <Grip className="mt-[4px] ml-[3px] w-[55px]" />
          <div className="mt-[1px] grid auto-rows-[28.1px] grid-cols-[28px_29px] items-center">
            {tools.map(([g, fly], i) => <div key={i} className="flex justify-center"><Svg fly={fly} className="size-[23px]">{g}</Svg></div>)}
          </div>
        </aside>
        <aside className="flex w-[88px] shrink-0 flex-col pr-[7px] pl-[3px]">
          <Grip className="mt-[4px] ml-[2px]" />
          <div className="mt-[2px] flex h-[23px] w-[78px]">
            <div className="flex h-6 w-[40px] items-center gap-[4px] rounded-tl border-t border-l border-[#bcc5dc] bg-[#f6f6fa] pl-[5px]">
              <Svg className="size-[18px]"><path d="M2 7h5l2-3h7l1 3h5v13H2z" fill="#333" /><circle cx="13" cy="13" r="5" fill="#667" stroke="#ccc" /><circle cx="13" cy="13" r="2" fill="#357" /></Svg>
              <T className="w-[23px]">N...</T>
            </div>
            <svg className="h-6 w-[24px]" viewBox="0 0 24 24"><path d="M0 0 24 23.500H0z" fill="#f6f6fa" /><path d="M0 .5 23 23.500" stroke="#bcc5dc" /></svg>
            <div className="relative z-10 -ml-[6px] flex items-center pt-px"><Svg className="size-[19px]">{gear('#b4b4b4', '#b4b4b4')}</Svg></div>
          </div>
          <div className="flex h-[750px] w-[79px] flex-col border border-[#bcc5dc] bg-white">
            <div className="grid h-[151px] auto-rows-[30px] grid-cols-[28px_28px] items-center justify-items-center border-b border-[#bcc5dc] bg-[#f6f6fa]">
              {panelTools.map((g, i) => <Svg key={i} className="size-[23px]">{g}</Svg>)}
            </div>
            <div className="flex h-[452px] flex-col items-center pt-[216px] text-[#5c5c5c] italic">
              <T className="w-[67px]">No named</T>
              <T className="w-[69px]">views have</T>
              <T className="w-[70px]">been saved</T>
            </div>
            <div className="flex grow flex-col gap-3 overflow-hidden border-t border-[#bcc5dc] bg-[#f6f6fa] pt-[8px] pl-[9px]">
              {([['Auto-update', 0, 'w-[84px]'], ['Restore view', 0, 'w-[86px]'], ['Show names', 3, 'w-[80px]'], ['Lock names', 3, 'w-[75px]'], ['Auto-select', 0, 'w-[77px]']] as [string, number, string][]).map(([t, s, w]) => (
                <div key={t} className={`flex h-4 w-[68px] items-center gap-[4px] ${s ? 'text-[#7c7c7c]' : ''}`}><Box state={s} /><T className={`-my-1 ${w}`}>{t}</T></div>
              ))}
            </div>
          </div>
        </aside>
        <section className="flex w-[1366px] shrink-0 flex-col">
          <div className="relative h-[758px] border border-[#bcc5dc] bg-white">
            <Viewport />
            <div className="absolute top-0 left-0 flex h-[23px] w-[114px] items-center bg-[#8ea6c1] pb-[2px] pl-[10px] font-bold">
              <T className="w-[80px]">Perspective</T>
              <div className="ml-[10px] h-[19px] w-px translate-y-px bg-black" />
              <svg className="ml-[1px] h-[5px] w-[9px]" viewBox="0 0 9 5"><path d="M0 0h9L4.500 5z" /></svg>
            </div>
          </div>
          <div className="flex h-[26px]">
            {viewTabs.map(([l, c, w]) => (
              <div key={l} className={`flex h-[26px] items-center rounded-br border-r border-b border-[#bcc5dc] [clip-path:polygon(0_0,100%_0,100%_100%,11px_100%,0_16px)] ${c}`}><T className={w}>{l}</T></div>
            ))}
            <div className="flex h-[26px] w-[37px] items-center justify-center border-r border-b border-[#c9d0e2] [clip-path:polygon(0_0,100%_0,100%_100%,11px_100%,0_16px)]">
              <svg className="ml-[6px] size-[11px]" viewBox="0 0 11 11"><path d="M4 .5h3V4h3.500v3H7v3.500H4V7H.5V4H4z" fill="#fff" stroke="#666" /></svg>
            </div>
          </div>
        </section>
        <aside className="ml-[7px] flex w-[398px] shrink-0 flex-col">
          <Grip className="mt-[4px] w-[397px]" />
          <div className="mt-[2px] flex h-[23px]">
            {rightTabs.map(([l, w, tw, g], i) => (
              <div key={l} className={`flex h-6 shrink-0 ${w}`}>
                <div className={`flex h-6 grow items-center gap-px rounded-tl border-t border-l border-[#bcc5dc] pl-[3px] ${i === 1 ? 'bg-[#f6f6fa]' : 'bg-[#d7d7d7]'}`}>
                  <Svg className="size-[22px]">{g}</Svg>
                  <T className={`relative z-10 ${tw}`}>{l}</T>
                </div>
                <svg className="-ml-[5px] h-6 w-[19px] shrink-0" viewBox="0 0 19 24"><path d="m0 0 19 21v3H0z" fill={i === 1 ? '#f6f6fa' : '#d7d7d7'} /><path d="m0 .5 19 21" stroke="#bcc5dc" fill="none" /></svg>
              </div>
            ))}
            <Svg className="mt-[4px] -ml-[2px] size-[18px]">{gear('#b4b4b4', '#b4b4b4')}</Svg>
          </div>
          <div className="flex h-[750px] flex-col border border-[#bcc5dc] bg-[#f6f6fa]">
            <div className="flex h-[31px] items-center border-b border-[#bcc5dc]">
              {layerTools.map(([g, fly], i) => <div key={i} className="flex w-7 justify-center"><Svg fly={fly} dark={i !== 7} className="size-[23px]">{g}</Svg></div>)}
            </div>
            <div className="flex w-[393px] grow flex-col overflow-hidden bg-white">
              <div className="flex h-[26px] items-stretch [&>div]:flex [&>div]:shrink-0 [&>div]:items-center [&>div]:border-r [&>div]:border-[#ddd]">
                <div className="w-[195px] pl-[6px]"><T className="w-[40px]">Name</T></div>
                <div className="w-[21px]" /><div className="w-[21px]" /><div className="w-[21px]" /><div className="w-[21px]" />
                <div className="w-[80px] pl-[6px]"><T className="w-[54px]">Material</T></div>
                <T className="mt-[3px] ml-[6px] w-[27px]">Line</T>
              </div>
              <LayerRow name="Default" w="w-[49px]" bulbFill="#ffe98a" lock mat="none" />
              <LayerRow name="Busstop" w="w-[52px]" bulbFill="#5a90e0" lock mat="white" matText="Plaster" />
              <LayerRow name="Bridge" w="w-[46px]" mat="none" current />
              <LayerRow name="Road" w="w-[34px]" bulbFill="#ffe98a" lock mat="black" matText="Plaster..." sel />
              <div className="mt-auto flex h-[20px] items-center bg-[#f0f0f0]">
                <svg className="ml-[6px] h-[10px] w-2" viewBox="0 0 8 10"><path d="M7 1 2 5l5 4" fill="none" stroke="#444" strokeWidth="2.200" /></svg>
                <div className="ml-[7px] h-[19px] w-[254px] self-start bg-[#cdcdcd]" />
                <svg className="mr-[7px] ml-auto h-[10px] w-2" viewBox="0 0 8 10"><path d="m1 1 5 4-5 4" fill="none" stroke="#444" strokeWidth="2.200" /></svg>
              </div>
            </div>
          </div>
        </aside>
      </main>
      {/* object snaps */}
      <section className="flex h-[34px] shrink-0 items-center pt-[2px]">
        <div className="mr-[5px] ml-[4px] h-[24px] w-[3px] border-x border-[#c9d0e2]" />
        {osnaps.map(([l, w, cw, s]) => (
          <div key={l} className={`flex shrink-0 items-center gap-[5px] pt-[6px] ${cw}`}><Box state={s} /><T className={w}>{l}</T></div>
        ))}
      </section>
      {/* status bar */}
      <section className="flex h-[22px] shrink-0 border-t border-[#bcc5dc] [&>div]:flex [&>div]:shrink-0 [&>div]:items-center [&>div]:justify-center [&>div]:border-r [&>div]:border-[#bcc5dc] [&>div]:pt-px">
        {status.map(([l, c, w]) => <div key={l} className={c}><T className={w}>{l}</T></div>)}
        <div className="w-[208px] justify-start! gap-[3px] pl-[4px]"><span className="size-3.5 bg-black" /><T className="w-[44px]">Bridge</T></div>
        {status2.map(([l, c, w]) => <div key={l} className={c}><T className={w}>{l}</T></div>)}
        <div className="w-[638px] justify-start! pl-[2px]"><T className="w-[137px]">Memory use: 608 MB</T></div>
      </section>
      {/* taskbar */}
      <footer className="flex h-[50px] shrink-0 bg-[#004275] text-white">
        <TaskCell className="w-[60px]"><svg viewBox="0 0 20 20" className="size-5" fill="#fff"><path d="M0 3 8.500 1.800V9.500H0zM9.500 1.600 20 0v9.500H9.500zM0 10.500h8.500v7.700L0 17zM9.500 10.500H20V20L9.500 18.400z" /></svg></TaskCell>
        <TaskCell className="w-[60px]"><svg viewBox="0 0 22 22" className="size-[21px]" fill="none" stroke="#fff" strokeWidth="1.500"><circle cx="13.500" cy="8" r="6.800" /><path d="m8.500 13-7.500 8" /></svg></TaskCell>
        <TaskCell className="w-[60px]"><svg viewBox="0 0 20 20" className="size-5" fill="none" stroke="#fff" strokeWidth="1.300"><path d="M.7 0v3h12V0M.7 6h12v8H.7zM.7 20v-3.500h12V20M18 0v4M18 9v11" /><path d="M16.500 6h3v3h-3z" fill="#fff" stroke="none" /></svg></TaskCell>
        <TaskCell className="w-[65px] pl-[2px]">
          <Svg className="size-[29px]"><g stroke="none"><circle cx="12.500" cy="12" r="11.500" fill="#d35230" /><path d="M12.500.500A11.500 11.500 0 0 1 24 12H12.500z" fill="#ff8f6b" /><path d="M12.500.500A11.500 11.500 0 0 0 1 12h11.500z" fill="#ed6c47" /><path d="M0 6h12v12H0z" fill="#c43e1c" /><text x="6" y="15.800" textAnchor="middle" fontSize="10.500" fontWeight="bold" fill="#fff" fontFamily="Open Sans, sans-serif">P</text></g></Svg>
        </TaskCell>
        <TaskCell line={<div className="flex h-[3px] w-[51px]"><div className="w-[40px] bg-[#9cc8f0]" /><div className="grow bg-[#6d93b8]" /></div>}>
          <Svg className="size-[28px]"><g stroke="none"><circle cx="12" cy="12" r="11.500" fill="#fbc116" /><path d="M2 6.200A11.500 11.500 0 0 1 22 6.200L22.500 7H12l-5 7z" fill="#e33b2e" /><path d="M2 6.200 7.500 15l4.500 2.500L9.800 23.300A11.500 11.500 0 0 1 2 6.200z" fill="#249a41" /><circle cx="12" cy="12" r="5.400" fill="#fff" /><circle cx="12" cy="12" r="4.300" fill="#4285f4" /></g></Svg>
        </TaskCell>
        <TaskCell line={line}>{office('W', '#185abd', ['#41a5ee', '#2b7cd3', '#1a5dc0', '#103f91'])}</TaskCell>
        <TaskCell>{office('X', '#107c41', ['#21a366', '#33c481', '#128045', '#185c37'])}</TaskCell>
        <TaskCell>
          <Svg className="size-[30px]"><g stroke="none"><ellipse cx="9" cy="9" rx="8.800" ry="7.500" fill="#7ed321" /><path d="m4 14-1 5 5-3z" fill="#7ed321" /><circle cx="6" cy="7" r="1.200" fill="#264a10" /><circle cx="12" cy="7" r="1.200" fill="#264a10" /><ellipse cx="17" cy="15.500" rx="7" ry="6" fill="#f4f4f4" /><path d="m19 20 2 3-5-2z" fill="#f4f4f4" /><circle cx="14.500" cy="14" r="1" fill="#888" /><circle cx="19" cy="14" r="1" fill="#888" /></g></Svg>
        </TaskCell>
        <TaskCell>
          <svg viewBox="0 0 30 30" className="size-[30px]">
            <path d="M0 0h30v30H0z" fill="#1b1b1b" />
            <path d="M10 0h19v14l-6 3-9-7-2-5z" fill="#4a4a4a" />
            <path d="M1 1h5C5 6 4 10 5 12l-4 6zM7 5c2-4 4-4 6-2l1 7 6 7c3 0 5-1 7-3 0 5 0 9-2 14h-3c-2 0-2-3-4-4l-8-2-8-7z" fill="#ddd" />
            <path d="M12 10c0 5 1 8 5 10l-2 1c-4-1-5-3-6-6z" fill="#333" />
            <circle cx="14" cy="16.500" r="1.200" fill="#e22" />
          </svg>
        </TaskCell>
        <TaskCell><svg viewBox="0 0 26 26" className="size-[27px]" fill="none"><path d="M1 1h24v24H1z" fill="#2b0a08" stroke="#e01b12" strokeWidth="2" /><path d="M6 20c3-1 7-8 7-13 0-2-2-1-1 1 2 6 4 8 8 8 2-1-1-2-4-1.500-4 .5-9 2.500-10 5.500z" stroke="#fff" strokeWidth="1.300" /></svg></TaskCell>
        <TaskCell><div className="flex size-[28px] items-center justify-center border-2 border-[#f07c10] bg-[#2b1200] text-[17px] leading-none font-semibold text-[#f07c10]"><T className="w-[15px]">Ai</T></div></TaskCell>
        <TaskCell className="w-[62px]" line={line}>
          <svg viewBox="0 0 28 26" className="h-[26px] w-7"><path d="M0 2h11l2 3h15v19H0z" fill="#ffd45e" /><path d="M0 1h11l2 2-2 3H0z" fill="#e59f0c" /><path d="M6 25V16c0-2 1-2 2-2h12c2 0 2 1 2 2v9h-4v-5h-8v5z" fill="#3a96dd" /></svg>
        </TaskCell>
        <TaskCell className="w-[61px] bg-[#005a9e]" line={<div className="h-[3px] w-[61px] bg-[#9cc8f0]" />}>
          <svg viewBox="0 0 30 30" className="size-[30px] overflow-visible">{rhinoHead}<text x="20" y="13" fontSize="15" fill="#eee" fontFamily="Open Sans, sans-serif">6</text></svg>
        </TaskCell>
        <div className="ml-auto flex items-center">
          <svg viewBox="0 0 16 9" className="mr-[12px] h-[9px] w-4"><path d="m.5 8.500 7.500-8 7.500 8" fill="none" stroke="#fff" strokeWidth="1.300" /></svg>
          <svg viewBox="0 0 20 14" className="mr-[15px] h-[14px] w-5" fill="none" stroke="#fff" strokeWidth="1.200"><path d="M6 3h12v9H5V9M19.500 6v3" /><path d="M7 5h9.500v5.500H7z" fill="#fff" /><path d="M1 0v3M4 0v3M0 3.500h5v2L2.500 7.500 0 5.500zM2.500 7v6" /></svg>
          <svg viewBox="0 0 20 20" className="mr-[18px] size-5" fill="none" stroke="#fff" strokeWidth="1.300"><path d="M7 17c1-5 5-12 8-16l2 2c-2 6-5 10-8 14zM11 7C5 7 1 10 .5 14c0 6 7 4 9 0 2-5 7-4 9.500-7-1 4-5 4-7 3" /></svg>
          <T className="mr-[20px] w-[28px]">ENG</T>
          <div className="mr-[27px] flex w-[61px] flex-col items-center gap-[3px] pb-px"><T className="w-[51px]">1:19 PM</T><T className="w-[60px]">8/6/2020</T></div>
          <div className="relative mr-[25px] h-[22px] w-5">
            <svg viewBox="0 0 20 22" className="h-[22px] w-5"><path d="M0 0h20v17H9l-4 5v-5H0z" fill="#fff" /><path d="M4 5h12M4 9h12M4 13h7" stroke="#004275" strokeWidth="1.300" /></svg>
            <div className="absolute top-[9px] left-[7px] flex size-[24px] items-center justify-center rounded-full border border-[#7fa5c8] bg-[#0a549a] text-[14px] leading-none font-bold">24</div>
          </div>
          <div className="mr-[5px] h-[50px] w-px bg-[#56809f]" />
        </div>
      </footer>
    </div>
  );
}
